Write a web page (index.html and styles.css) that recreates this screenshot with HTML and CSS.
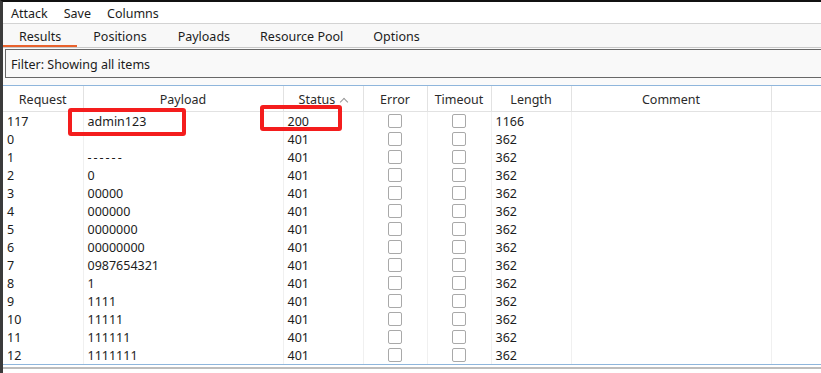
FILE: index.html
```html
<!DOCTYPE html>
<html lang="en">
<head>
    <meta charset="UTF-8">
    <title>Intruder attack</title>
    <link rel="stylesheet" href="styles.css">
</head>
<body>
<div class="window">
    <div class="menu-bar">
        <span>Attack</span>
        <span>Save</span>
        <span>Columns</span>
    </div>
    <div class="tab-bar">
        <div class="tab active">Results</div>
        <div class="tab">Positions</div>
        <div class="tab">Payloads</div>
        <div class="tab">Resource Pool</div>
        <div class="tab">Options</div>
    </div>
    <div class="filter-area">
        <div class="filter-box">Filter: Showing all items</div>
    </div>
    <div class="results">
        <table class="results-table">
            <colgroup>
                <col style="width:80px"><col style="width:200px"><col style="width:80px"><col style="width:64px">
                <col style="width:64px"><col style="width:80px"><col style="width:200px"><col>
            </colgroup>
            <thead>
                <tr>
                    <th>Request</th>
                    <th>Payload</th>
                    <th class="sorted">Status <span class="sort-arrow"></span></th>
                    <th>Error</th>
                    <th>Timeout</th>
                    <th>Length</th>
                    <th>Comment</th>
                    <th></th>
                </tr>
            </thead>
            <tbody id="rows"></tbody>
        </table>
        <div class="mark mark-payload"></div>
        <div class="mark mark-status"></div>
    </div>
    <div class="bottom-line"></div>
</div>
<script>
const rows = [
    ["117", "admin123", "200", "1166"],
    ["0", "", "401", "362"],
    ["1", "------", "401", "362"],
    ["2", "0", "401", "362"],
    ["3", "00000", "401", "362"],
    ["4", "000000", "401", "362"],
    ["5", "0000000", "401", "362"],
    ["6", "00000000", "401", "362"],
    ["7", "0987654321", "401", "362"],
    ["8", "1", "401", "362"],
    ["9", "1111", "401", "362"],
    ["10", "11111", "401", "362"],
    ["11", "111111", "401", "362"],
    ["12", "1111111", "401", "362"]
];
const tbody = document.getElementById("rows");
rows.forEach((r) => {
    const tr = document.createElement("tr");
    const payload = r[1].startsWith("-") ? `<span class="dashes">${r[1]}</span>` : r[1];
    tr.innerHTML = `<td>${r[0]}</td><td>${payload}</td><td>${r[2]}</td>` +
        `<td class="check"><span class="box"></span></td><td class="check"><span class="box"></span></td>` +
        `<td>${r[3]}</td><td></td><td></td>`;
    tbody.appendChild(tr);
});
</script>
</body>
</html>
```

FILE: styles.css
```css
* {
    margin: 0;
    padding: 0;
    box-sizing: border-box;
}

body {
    background-color: #fff;
    font-family: "Noto Sans", sans-serif;
    font-size: 12.5px;
    color: #1c1c1c;
    overflow: hidden;
}

.window {
    border-top: 2px solid #111;
    border-left: 3px solid #3b3b3b;
    height: 373px;
}

.menu-bar {
    height: 22px;
    display: flex;
    align-items: center;
    padding: 1px 0 0 8px;
    gap: 16px;
    background-color: #fff;
    border-bottom: 1px solid #d3d3d3;
}

.tab-bar {
    height: 24px;
    display: flex;
    background-color: #f8f8f8;
    border-bottom: 1px solid #c9c9c9;
}

.tab {
    height: 23px;
    line-height: 23px;
    padding: 1px 16px 0;
    color: #1c1c1c;
}

.tab:nth-child(n+3) {
    padding: 1px 15px 0;
}

.tab.active {
    border-bottom: 2px solid #e9622d;
}

.filter-area {
    height: 37px;
    padding: 1px 0 0 2px;
    background-color: #fafafa;
}

.filter-box {
    height: 29px;
    width: 830px;
    border: 1px solid #686868;
    background-color: #f9f9f9;
    line-height: 27px;
    padding: 1px 0 0 5px;
}

.results {
    position: relative;
    height: 280px;
    border-top: 1px solid #8fb6dc;
    border-bottom: 1px solid #8fb6dc;
    background-color: #fff;
    overflow: hidden;
}

.results-table {
    border-collapse: collapse;
    table-layout: fixed;
    width: 840px;
}

.results-table th {
    height: 25px;
    padding-top: 2px;
    font-weight: normal;
    color: #2a2a2a;
    text-align: center;
    border-right: 1px solid #e2e2e2;
    border-bottom: 1px solid #e2e2e2;
}

.results-table td {
    height: 18px;
    line-height: 16px;
    padding: 2px 0 0 4px;
    border-right: 1px solid #f0f0f0;
    white-space: nowrap;
}

.results-table td.check {
    padding: 0;
    text-align: center;
}

.dashes {
    letter-spacing: 2px;
}

.sort-arrow {
    display: inline-block;
    width: 6px;
    height: 6px;
    border-left: 1px solid #999;
    border-top: 1px solid #999;
    transform: rotate(45deg);
    margin-left: 3px;
    vertical-align: -1px;
}

.box {
    display: inline-block;
    width: 14px;
    height: 14px;
    border: 1px solid #a9a9a9;
    border-radius: 2px;
    background-color: #fff;
    vertical-align: -3px;
}

.mark {
    position: absolute;
    border: 4px solid #f41d1d;
    border-radius: 3px;
}

.mark-payload {
    left: 65px;
    top: 22px;
    width: 118px;
    height: 28px;
}

.mark-status {
    left: 257px;
    top: 19px;
    width: 82px;
    height: 26px;
}

.bottom-line {
    height: 2px;
    margin-top: 2px;
    background-color: #bdbdbd;
}
```
